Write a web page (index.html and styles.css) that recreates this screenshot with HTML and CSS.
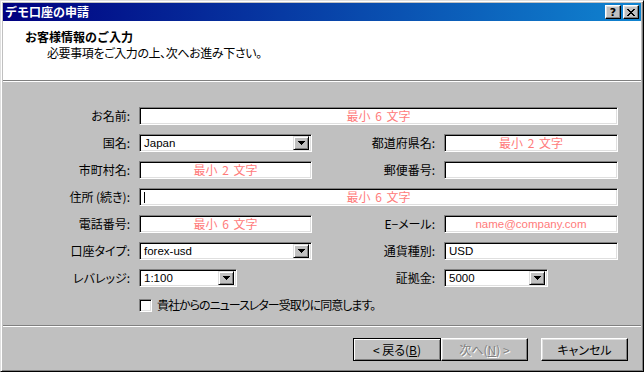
FILE: index.html
```html
<!DOCTYPE html>
<html lang="ja">
<head>
<meta charset="utf-8">
<title>デモ口座の申請</title>
<link rel="stylesheet" href="styles.css">
</head>
<body>
<div class="window">
  <div class="titlebar">
    <span class="title">デモ口座の申請</span>
    <div class="tb-btns">
      <span class="tbb tbb-help">?</span>
      <span class="tbb"><svg width="8" height="7" viewBox="0 0 8 7"><path d="M0 0h2v1h1v1h2V1h1V0h2v1H7v1H6v1H5v1h1v1h1v1h1v1H6V6H5V5H3v1H2v1H0V6h1V5h1V4h1V3H2V2H1V1H0z" fill="#000"/></svg></span>
    </div>
  </div>
  <div class="header">
    <div class="h-title">お客様情報のご入力</div>
    <div class="h-sub">必要事項をご入力の上、次へお進み下さい。</div>
  </div>
  <div class="body">
    <div class="form">
      <div class="lbl">お名前:</div>
      <div class="field wide"><span class="ph">最小 6 文字</span></div>

      <div class="lbl">国名:</div>
      <div class="field combo"><span class="val">Japan</span><span class="dd"><svg width="7" height="4" viewBox="0 0 7 4"><path d="M0 0h7v1H6v1H5v1H4v1H3V3H2V2H1V1H0z" fill="#000"/></svg></span></div>
      <div class="lbl">都道府県名:</div>
      <div class="field"><span class="ph">最小 2 文字</span></div>

      <div class="lbl">市町村名:</div>
      <div class="field"><span class="ph">最小 2 文字</span></div>
      <div class="lbl">郵便番号:</div>
      <div class="field"></div>

      <div class="lbl">住所 (続き):</div>
      <div class="field wide"><span class="caret"></span><span class="ph">最小 6 文字</span></div>

      <div class="lbl">電話番号:</div>
      <div class="field"><span class="ph">最小 6 文字</span></div>
      <div class="lbl">E−メール:</div>
      <div class="field"><span class="ph lat">name@company.com</span></div>

      <div class="lbl">口座タイプ:</div>
      <div class="field combo"><span class="val">forex-usd</span><span class="dd"><svg width="7" height="4" viewBox="0 0 7 4"><path d="M0 0h7v1H6v1H5v1H4v1H3V3H2V2H1V1H0z" fill="#000"/></svg></span></div>
      <div class="lbl">通貨種別:</div>
      <div class="field"><span class="val">USD</span></div>

      <div class="lbl">レバレッジ:</div>
      <div><div class="field combo lev"><span class="val">1:100</span><span class="dd"><svg width="7" height="4" viewBox="0 0 7 4"><path d="M0 0h7v1H6v1H5v1H4v1H3V3H2V2H1V1H0z" fill="#000"/></svg></span></div></div>
      <div class="lbl">証拠金:</div>
      <div><div class="field combo dep"><span class="val">5000</span><span class="dd"><svg width="7" height="4" viewBox="0 0 7 4"><path d="M0 0h7v1H6v1H5v1H4v1H3V3H2V2H1V1H0z" fill="#000"/></svg></span></div></div>

      <div class="lbl"></div>
      <label class="check"><span class="box"></span><span class="check-text">貴社からのニュースレター受取りに同意します。</span></label>
    </div>
  </div>
  <div class="footer">
    <span class="btn btn-default">&lt; 戻る(<u>B</u>)</span>
    <span class="btn btn-disabled">次へ(<u>N</u>) &gt;</span>
    <span class="btn btn-cancel">キャンセル</span>
  </div>
</div>
</body>
</html>
```
FILE: styles.css
```css
* { box-sizing: border-box; }
html, body { margin: 0; padding: 0; }
body {
  width: 644px;
  height: 372px;
  background: #c0c0c0;
  font-family: "Noto Sans CJK JP", "Noto Sans", sans-serif;
  font-size: 12px;
  color: #000;
  overflow: hidden;
  font-feature-settings: "palt" 1;
}
.window {
  width: 644px;
  height: 372px;
  background: #c0c0c0;
  border: 1px solid;
  border-color: #dfdfdf #000 #000 #dfdfdf;
  box-shadow: inset 1px 1px #fff, inset -1px -1px #808080;
  padding: 2px;
  display: flex;
  flex-direction: column;
}
.titlebar {
  height: 18px;
  flex: none;
  background: linear-gradient(90deg, #000080 0%, #1084d0 100%);
  display: flex;
  align-items: center;
  justify-content: space-between;
  padding: 0 2px 0 2px;
}
.title {
  color: #fff;
  font-weight: bold;
  font-size: 12px;
  line-height: 14px;
  font-feature-settings: normal;
}
.tb-btns { display: flex; gap: 2px; }
.tbb {
  width: 16px;
  height: 14px;
  background: #c0c0c0;
  border: 1px solid;
  border-color: #fff #000 #000 #fff;
  box-shadow: inset -1px -1px #808080, inset 1px 1px #dfdfdf;
  display: flex;
  align-items: center;
  justify-content: center;
  font-family: "DejaVu Sans", sans-serif;
  font-weight: bold;
  font-size: 11px;
  line-height: 11px;
  color: #000;
}
.header {
  height: 61px;
  flex: none;
  background: #fff;
  border-bottom: 1px solid #fff;
  box-shadow: inset 0 -1px #808080;
  padding-top: 8px;
}
.h-title {
  padding-left: 22px;
  font-weight: bold;
  line-height: 16px;
  font-feature-settings: normal;
}
.h-sub {
  padding-left: 44px;
  line-height: 16px;
  letter-spacing: -0.4px;
}
.body {
  height: 245px;
  flex: none;
  border-bottom: 1px solid #fff;
  box-shadow: inset 0 -1px #808080;
  padding-top: 25px;
}
.form {
  display: grid;
  grid-template-columns: 126px 173px 112px 174px;
  column-gap: 10px;
  grid-auto-rows: 18px;
  row-gap: 9px;
}
.lbl {
  display: flex;
  align-items: center;
  justify-content: flex-end;
  white-space: nowrap;
  line-height: 14px;
  margin-right: -1px;
}
.field {
  height: 18px;
  background: #fff;
  border: 1px solid;
  border-color: #808080 #fff #fff #808080;
  box-shadow: inset 1px 1px #000, inset -1px -1px #dfdfdf;
  display: flex;
  align-items: center;
  padding: 2px;
  line-height: 14px;
  position: relative;
}
.field.wide { grid-column: 2 / 5; }
.ph {
  flex: 1;
  text-align: center;
  color: #ff7b7b;
  white-space: nowrap;
  word-spacing: 2px;
}
.lat, .val {
  font-family: "Liberation Sans", "Noto Sans CJK JP", sans-serif;
  font-size: 11.5px;
  word-spacing: 0;
}
.val {
  flex: 1;
  padding-left: 2px;
  white-space: nowrap;
}
.caret {
  position: absolute;
  left: 4px;
  top: 3px;
  width: 1px;
  height: 11px;
  background: #000;
}
.dd {
  width: 16px;
  height: 14px;
  flex: none;
  background: #c0c0c0;
  border: 1px solid;
  border-color: #dfdfdf #000 #000 #dfdfdf;
  box-shadow: inset 1px 1px #fff, inset -1px -1px #808080;
  display: flex;
  align-items: center;
  justify-content: center;
}
.dd svg { display: block; }
.lev { width: 98px; }
.dep { width: 104px; }
.check {
  grid-column: 2 / 5;
  display: flex;
  align-items: center;
  gap: 5px;
  line-height: 14px;
}
.check-text { letter-spacing: -1px; }
.box {
  width: 13px;
  height: 13px;
  background: #fff;
  border: 1px solid;
  border-color: #808080 #fff #fff #808080;
  box-shadow: inset 1px 1px #000, inset -1px -1px #dfdfdf;
}
.footer {
  flex: 1;
  display: flex;
  justify-content: flex-end;
  align-items: flex-start;
  padding: 11px 13px 0 0;
}
.btn {
  width: 87px;
  height: 23px;
  background: #c0c0c0;
  border: 1px solid;
  border-color: #fff #000 #000 #fff;
  box-shadow: inset -1px -1px #808080, inset 1px 1px #dfdfdf;
  display: flex;
  align-items: center;
  justify-content: center;
  line-height: 14px;
  white-space: nowrap;
}
.btn-default {
  width: 88px;
  border-color: #000;
  box-shadow: inset 1px 1px #fff, inset -1px -1px #808080;
}
.btn-disabled {
  color: #808080;
  text-shadow: 1px 1px #fff;
}
.btn-cancel { margin-left: 13px; }
```
